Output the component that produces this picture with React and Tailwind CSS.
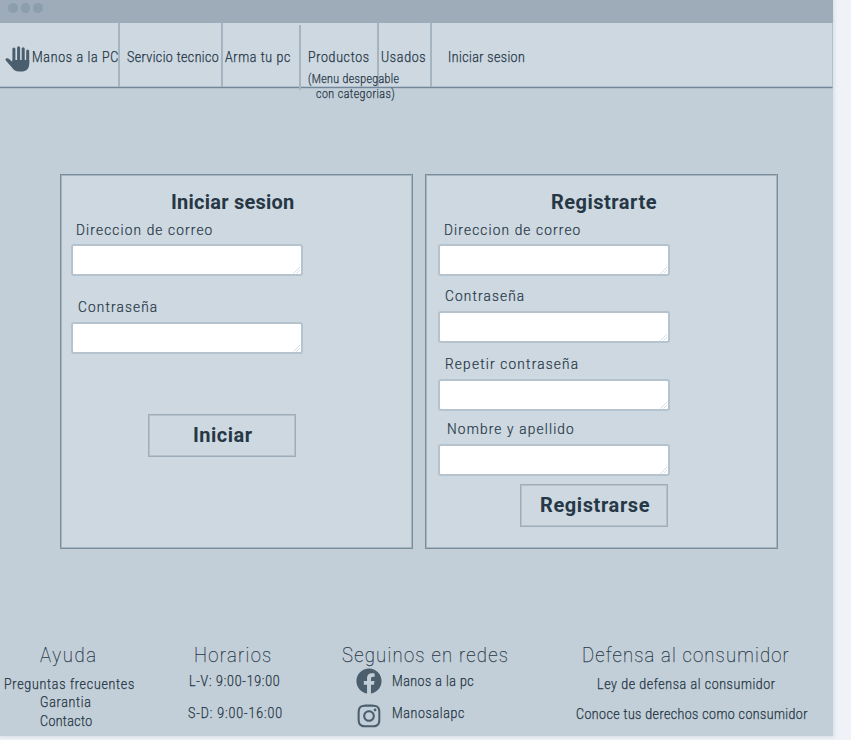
import { useLayoutEffect, useRef, useState } from "react";
import { FaFacebook } from "react-icons/fa";
import { FaInstagram } from "react-icons/fa6";

const SQUEEZE = 0.88;

// Condensed, letter-spaced label that spans exactly `w` pixels.
function T({ w, className = "", squeeze = SQUEEZE, children }) {
  const ref = useRef(null);
  const [spacing, setSpacing] = useState(0);
  useLayoutEffect(() => {
    const natural = ref.current.offsetWidth;
    setSpacing((w / squeeze - natural) / (String(children).length - 1));
  }, [w, squeeze, children]);
  return (
    <span className={`block h-5 shrink-0 whitespace-nowrap leading-5 ${className}`} style={{ width: w }}>
      <span
        ref={ref}
        className="inline-block origin-left"
        style={{ letterSpacing: spacing, transform: `scaleX(${squeeze})` }}
      >
        {children}
      </span>
    </span>
  );
}

function Hand({ className }) {
  return (
    <svg className={className} viewBox="0 0 25 26" fill="none" stroke="currentColor" strokeWidth="3" strokeLinecap="round">
      <path d="M8.9 3V17M13.6 1.8V17M18.2 2.7V17M22.7 5V17" />
      <path
        fill="currentColor"
        stroke="none"
        d="M7.4 14H24.2V18C24.2 23 21 25.6 16.5 25.6H14C10.8 25.6 8.6 24.2 7 21.6L1 14.7C-0.2 13 1 12.2 2.2 12.3C3.6 12.4 5 13.8 7.4 16Z"
      />
    </svg>
  );
}

function Field({ label, w, labelClass, className = "" }) {
  return (
    <div className={`flex h-[52px] shrink-0 flex-col justify-between ${className}`}>
      <T w={w} className={`text-[15.5px] font-light [-webkit-text-stroke:0.2px_#263746] ${labelClass}`}>{label}</T>
      <div className="flex h-8 w-[232px] items-end justify-end rounded-[3px] border-2 border-[#b5c3ce] bg-white">
        <svg className="size-2" viewBox="0 0 8 8" stroke="#cbd4dc" strokeWidth="0.8">
          <path d="M0.5 7.5 L7 1 M3.5 7.5 L7 4" />
        </svg>
      </div>
    </div>
  );
}

function Panel({ children, className = "" }) {
  return (
    <section
      className={`flex h-[375px] w-[353px] shrink-0 flex-col border border-[#7b8c9a] bg-[#cdd8e1] shadow-[inset_0_0_0_1px_#a7b5c0] ${className}`}
    >
      {children}
    </section>
  );
}

function Button({ children, w, className }) {
  return (
    <button
      className={`flex h-[43px] w-[148px] shrink-0 items-start border border-[#9dadb9] pt-[10px] shadow-[inset_0_0_0_1px_#b5c2cc] ${className}`}
    >
      <T w={w} squeeze={1} className="text-left text-[20px] font-bold">{children}</T>
    </button>
  );
}

export default function App() {
  return (
    <div className="h-[740px] w-[851px] overflow-hidden bg-[#eff3f7] font-['Roboto','Liberation_Sans',sans-serif] text-[#263746]">
      <div className="flex h-[736px] w-[833px] flex-col bg-[#c3cfd8] shadow-[0_0_4px_1px_#d3dbe3]">
        <div className="flex h-[23px] shrink-0 gap-[3px] bg-[#9dacb8] pl-2 pt-[3px]">
          <i className="size-[9.5px] rounded-full bg-[#8c9dab]" />
          <i className="size-[9.5px] rounded-full bg-[#8c9dab]" />
          <i className="size-[9.5px] rounded-full bg-[#8c9dab]" />
        </div>

        <nav className="flex h-[65px] shrink-0 border-b border-r border-b-[#74879a] border-r-[#b0c0cc] bg-[#cdd8e1] text-[14px] font-light shadow-[0_1px_0_#b3c1cc,inset_0_-1px_0_#b3c1cc] [-webkit-text-stroke:0.25px_#263746]">
          <div className="flex w-[120px] shrink-0 border-r-2 border-[#a4b4c0] pl-[5px]">
            <Hand className="mt-[23px] h-[26px] w-[25px] shrink-0 text-[#4b5e6d]" />
            <T w={86} className="ml-[2px] mt-6">Manos a la PC</T>
          </div>
          <div className="w-[103px] shrink-0 border-r-2 border-[#a4b4c0] pl-[7px] pt-6">
            <T w={92}>Servicio tecnico</T>
          </div>
          <div className="w-[76px] shrink-0 pl-[2px] pt-6">
            <T w={65}>Arma tu pc</T>
          </div>
          <div className="relative flex w-20 shrink-0 border-r-2 border-[#a4b4c0]">
            <span className="mt-[2px] h-[65px] w-[2px] shrink-0 bg-[#a4b4c0]" />
            <T w={61} className="ml-[7px] mt-6">Productos</T>
            <div className="absolute left-[9px] top-[46px] z-10 text-[12px]">
              <T w={91}>(Menu despegable</T>
              <T w={79} className="-mt-[5px] ml-2">con categorias)</T>
            </div>
          </div>
          <div className="w-[53px] shrink-0 border-r-2 border-[#a4b4c0] pl-[2px] pt-6">
            <T w={45}>Usados</T>
          </div>
          <div className="pl-4 pt-6">
            <T w={77}>Iniciar sesion</T>
          </div>
        </nav>

        <main className="flex h-[547px] shrink-0 gap-3 pl-[60px] pt-[86px]">
          <Panel className="pl-[10px] pt-[17px]">
            <T w={123} squeeze={1} className="ml-[100px] text-[20px] font-bold">Iniciar sesion</T>
            <Field className="mt-[12px]" labelClass="-mt-[4px] ml-[5px]" w={136} label="Direccion de correo" />
            <Field className="mt-[26px]" labelClass="-mt-[5px] ml-[7px]" w={79} label="Contraseña" />
            <Button w={59} className="ml-[77px] mt-[60px] pl-[44px]">Iniciar</Button>
          </Panel>
          <Panel className="pl-3 pt-[17px]">
            <T w={105} squeeze={1} className="ml-[113px] text-[20px] font-bold">Registrarte</T>
            <Field className="mt-[12px]" labelClass="-mt-[4px] ml-[6px]" w={136} label="Direccion de correo" />
            <Field className="mt-[15px]" labelClass="-mt-[5px] ml-[7px]" w={79} label="Contraseña" />
            <Field className="mt-4" labelClass="-mt-[5px] ml-[7px]" w={133} label="Repetir contraseña" />
            <Field className="mt-[13px]" labelClass="-mt-[5px] ml-[9px]" w={127} label="Nombre y apellido" />
            <Button w={109} className="ml-[82px] mt-2 pl-[19px]">Registrarse</Button>
          </Panel>
        </main>

        <footer className="flex grow pt-[10px] text-[14px] font-light [-webkit-text-stroke:0.25px_#263746]">
          <div className="w-[188px] shrink-0">
            <T w={56} className="ml-10 text-[21px] font-thin">Ayuda</T>
            <T w={130} className="ml-1 mt-[9px]">Preguntas frecuentes</T>
            <T w={51} className="-mt-[2px] ml-10">Garantia</T>
            <T w={52} className="-mt-px ml-10">Contacto</T>
          </div>
          <div className="w-[154px] shrink-0">
            <T w={77} className="ml-[6px] text-[21px] font-thin">Horarios</T>
            <T w={91} className="ml-px mt-[6px]">L-V: 9:00-19:00</T>
            <T w={94} className="mt-3">S-D: 9:00-16:00</T>
          </div>
          <div className="w-[234px] shrink-0">
            <T w={166} className="text-[21px] font-thin">Seguinos en redes</T>
            <div className="ml-[14px] mt-[3px] flex h-[26px] gap-[10px]">
              <FaFacebook className="size-[26px] text-[#4b5e6d]" />
              <T w={82} className="mt-[3px]">Manos a la pc</T>
            </div>
            <div className="ml-[14px] mt-[6px] flex gap-[10px]">
              <FaInstagram className="mt-[3px] size-[26px] text-[#4b5e6d]" />
              <T w={72} className="mt-[3px]">Manosalapc</T>
            </div>
          </div>
          <div className="shrink-0">
            <T w={207} className="ml-[6px] text-[21px] font-thin">Defensa al consumidor</T>
            <T w={178} className="ml-[21px] mt-[9px]">Ley de defensa al consumidor</T>
            <T w={231} className="mt-[10px]">Conoce tus derechos como consumidor</T>
          </div>
        </footer>
      </div>
    </div>
  );
}
